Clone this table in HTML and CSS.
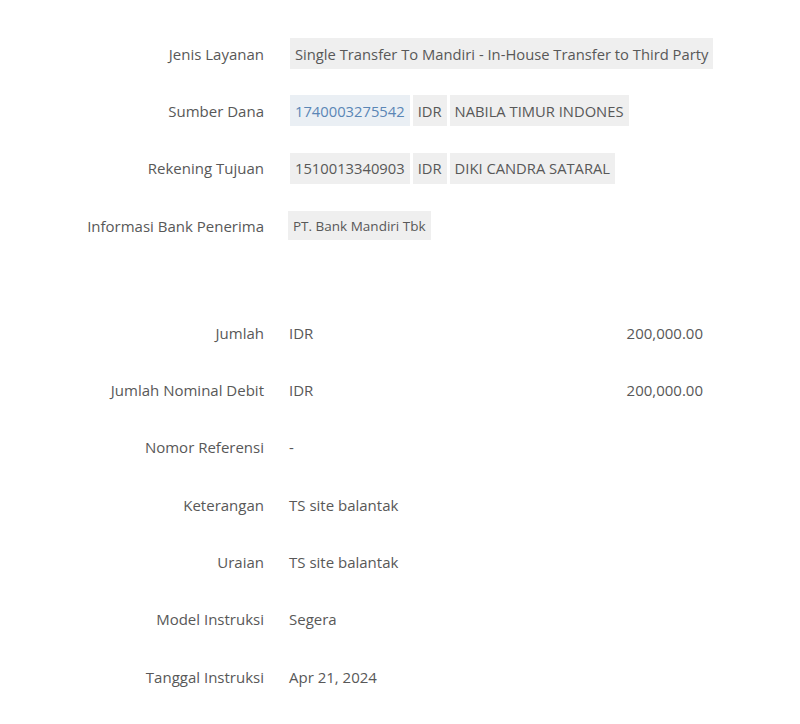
FILE: index.html
```html
<!DOCTYPE html>
<html>
  <head>
    <meta charset="UTF-8">
    <title>Detail Transaksi</title>
    <link rel="stylesheet" href="styles.css">
  </head>
  <body>
    <div class="detail">
      <div class="row">
        <div class="label">Jenis Layanan</div>
        <div class="value">
          <span class="chip">Single Transfer To Mandiri - In-House Transfer to Third Party</span>
        </div>
      </div>
      <div class="row">
        <div class="label">Sumber Dana</div>
        <div class="value">
          <span class="chip link">1740003275542</span>
          <span class="chip">IDR</span>
          <span class="chip">NABILA TIMUR INDONES</span>
        </div>
      </div>
      <div class="row">
        <div class="label">Rekening Tujuan</div>
        <div class="value">
          <span class="chip">1510013340903</span>
          <span class="chip">IDR</span>
          <span class="chip">DIKI CANDRA SATARAL</span>
        </div>
      </div>
      <div class="row">
        <div class="label">Informasi Bank Penerima</div>
        <div class="value">
          <span class="chip small">PT. Bank Mandiri Tbk</span>
        </div>
      </div>

      <div class="spacer"></div>

      <div class="row">
        <div class="label">Jumlah</div>
        <div class="value amount"><span>IDR</span><span>200,000.00</span></div>
      </div>
      <div class="row">
        <div class="label">Jumlah Nominal Debit</div>
        <div class="value amount"><span>IDR</span><span>200,000.00</span></div>
      </div>
      <div class="row">
        <div class="label">Nomor Referensi</div>
        <div class="value">-</div>
      </div>
      <div class="row">
        <div class="label">Keterangan</div>
        <div class="value">TS site balantak</div>
      </div>
      <div class="row">
        <div class="label">Uraian</div>
        <div class="value">TS site balantak</div>
      </div>
      <div class="row">
        <div class="label">Model Instruksi</div>
        <div class="value">Segera</div>
      </div>
      <div class="row">
        <div class="label">Tanggal Instruksi</div>
        <div class="value">Apr 21, 2024</div>
      </div>
    </div>
  </body>
</html>
```

FILE: styles.css
```css
html { margin: 0; padding: 0; background-color: white; }
body { margin: 0; padding: 25px 0 0 0; font-family: "Open Sans", sans-serif; font-size: 15px; color: #585858; }

.detail { display: flex; flex-direction: column; }

.row { display: grid; grid-template-columns: 264px 414px; column-gap: 25px; align-items: center; min-height: 57.3px; }

.label { text-align: right; }

.value { display: flex; gap: 3px; align-items: center; }
.value.amount { justify-content: space-between; }

.chip { display: inline-flex; align-items: center; height: 31px; padding: 0 5px 0 5px; background-color: #efefef; white-space: nowrap; font-size: 14.75px; }
.chip:first-child { margin-left: 1px; }
.chip.link { color: #5a86b6; background-color: #eaeff4; }
.chip.small { height: 29px; font-size: 13.5px; padding: 0 5px; margin-left: -1px; }

.spacer { height: 50px; }
```
